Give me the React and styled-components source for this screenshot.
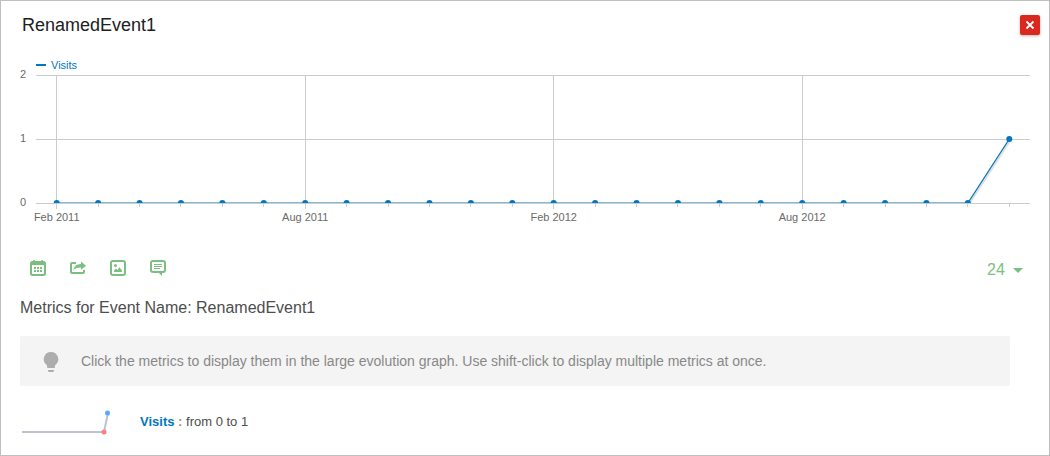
import React from "react";
import styled, { createGlobalStyle } from "styled-components";

const GlobalStyle = createGlobalStyle`
  *, *::before, *::after { box-sizing: border-box; }
  body {
    margin: 0;
    background: #fff;
    color: #4d4d4d;
    font-family: "Liberation Sans", Arial, sans-serif;
  }
`;

const Popover = styled.main`
  border: 1px solid #bfbfbf;
  padding-bottom: 17px;
`;

const Header = styled.header`
  display: flex;
  align-items: center;
  justify-content: space-between;
  height: 48px;
  padding: 0 9px 0 21px;
`;

const Title = styled.h1`
  margin: 0;
  font-size: 18px;
  line-height: 24px;
  font-weight: 400;
  color: #212121;
`;

const CloseButton = styled.button`
  display: grid;
  place-items: center;
  width: 20px;
  height: 20px;
  padding: 0;
  border: 0;
  border-radius: 2px;
  background: #d9291f;
  box-shadow: 0 1px 3px rgba(0, 0, 0, 0.3);
  cursor: pointer;
`;

const ChartArea = styled.section`
  padding: 8px 19px 0 35px;
`;

const ChartSvg = styled.svg`
  display: block;
  width: 100%;
  height: 171px;
  overflow: visible;
  font-size: 11px;
`;

const AxisText = styled.text`
  fill: #6a6a6a;
`;

const LegendText = styled.text`
  fill: #0077c0;
`;

const Toolbar = styled.div`
  display: flex;
  align-items: center;
  justify-content: space-between;
  height: 32px;
  margin-top: 24px;
  padding: 0 26px 0 29px;
  color: #7bbf80;
`;

const Actions = styled.div`
  display: flex;
  gap: 24px;
`;

const IconButton = styled.button`
  display: block;
  width: 16px;
  height: 16px;
  padding: 0;
  border: 0;
  background: none;
  color: inherit;
  cursor: pointer;

  svg { display: block; }
`;

const LimitLabel = styled.label`
  display: flex;
  align-items: center;
  gap: 8px;
  padding-top: 4px;
`;

const LimitSelect = styled.select`
  appearance: none;
  width: 18px;
  height: 24px;
  margin: 0;
  padding: 0;
  border: 0;
  background: none;
  color: inherit;
  font: 16px/24px "Liberation Sans", Arial, sans-serif;
  cursor: pointer;
`;

const Metrics = styled.section`
  padding: 0 39px 0 19px;
`;

const Subtitle = styled.h2`
  margin: 12px 0 16px;
  font-size: 16px;
  line-height: 24px;
  font-weight: 400;
`;

const Hint = styled.p`
  display: flex;
  align-items: center;
  gap: 22px;
  min-height: 50px;
  margin: 0;
  padding: 0 23px;
  border-radius: 2px;
  background: #f4f4f4;
  color: #888;
  font-size: 14px;
  line-height: 20px;

  svg { flex: none; }
`;

const MetricRow = styled.button`
  display: flex;
  align-items: center;
  gap: 20px;
  margin: 20px 0 0;
  padding: 0;
  border: 0;
  background: none;
  color: inherit;
  font: 13px/20px "Liberation Sans", Arial, sans-serif;
  cursor: pointer;

  strong { color: #0077c0; }
  em { color: #a08c7a; font-style: normal; font-weight: 700; }
`;

const visits = [...Array(23).fill(0), 1];
const monthLabels = { 0: "Feb 2011", 6: "Aug 2011", 12: "Feb 2012", 18: "Aug 2012" };
const xAt = (i) => `${((i + 0.5) / visits.length) * 100}%`;
const yAt = (v) => 146 - v * 64;

function EvolutionChart() {
  return (
    <ChartSvg role="img" aria-label="Visits per month">
      <rect y="7" width="10" height="2" fill="#0077c0" />
      <LegendText x="15" y="12">Visits</LegendText>
      {[2, 1, 0].map((v) => (
        <rect key={v} x="0" width="100%" y={yAt(v)} height="1" fill="#ccc" />
      ))}
      <g stroke="#ccc" shapeRendering="crispEdges">
        {visits.map((_, i) => (
          <line key={i} x1={xAt(i)} x2={xAt(i)} y1={monthLabels[i] ? 18 : 146} y2={monthLabels[i] ? 152 : 150} />
        ))}
      </g>
      <svg x="0" y="0" width="100%" height="146" overflow="hidden">
        {visits.slice(1).map((v, i) => v !== visits[i] && (
          <line key={i} x1={xAt(i)} x2={xAt(i + 1)} y1={yAt(visits[i]) + 2} y2={yAt(v) + 2} stroke="#000" strokeOpacity="0.13" strokeWidth="3" />
        ))}
        {visits.slice(1).map((v, i) => (
          <line key={i} x1={xAt(i)} x2={xAt(i + 1)} y1={yAt(visits[i])} y2={yAt(v)} stroke="#0077c0" strokeWidth="1.2" />
        ))}
        {visits.map((v, i) => (
          <circle key={i} cx={xAt(i)} cy={yAt(v)} r="3" fill="#0077c0" />
        ))}
      </svg>
      {[2, 1, 0].map((v) => (
        <AxisText key={v} x="-10" y={yAt(v) + 3} textAnchor="end">{v}</AxisText>
      ))}
      {Object.entries(monthLabels).map(([i, label]) => (
        <AxisText key={i} x={xAt(Number(i))} y="164" textAnchor="middle">{label}</AxisText>
      ))}
    </ChartSvg>
  );
}

const CalendarIcon = () => (
  <svg width="16" height="16" viewBox="0 0 16 16" fill="currentColor">
    <path fillRule="evenodd" d="M3 1a1 1 0 0 1 2 0h6a1 1 0 0 1 2 0h.500A2.500 2.500 0 0 1 16 3.500v10a2.500 2.500 0 0 1-2.500 2.500h-11A2.500 2.500 0 0 1 0 13.500v-10A2.500 2.500 0 0 1 2.500 1zM2 5v8a1 1 0 0 0 1 1h10a1 1 0 0 0 1-1V5z" />
    <path d="M4 7h2v2H4zM7 7h2v2H7zM10 7h2v2h-2zM4 10h2v2H4zM7 10h2v2H7zM10 10h2v2h-2z" />
  </svg>
);

const ShareIcon = () => (
  <svg width="16" height="16" viewBox="0 0 16 16">
    <path d="M6 3H2a1 1 0 0 0-1 1v8a1 1 0 0 0 1 1h11a1 1 0 0 0 1-1v-2" fill="none" stroke="currentColor" strokeWidth="2" />
    <path d="M11 1.500 16 5.700l-5 4.100V7.500C7.500 7.300 5.200 8.300 3.300 10 4 6.500 6.500 4 11 3.900z" fill="currentColor" />
  </svg>
);

const ImageIcon = () => (
  <svg width="16" height="16" viewBox="0 0 16 16">
    <rect x="1" y="1" width="14" height="14" rx="2" fill="none" stroke="currentColor" strokeWidth="2" />
    <circle cx="5.500" cy="5.500" r="1.500" fill="currentColor" />
    <path d="M4 12v-1.500L6 8.500 7.500 10l2-3 1.500 2.500.5-.5.500 3z" fill="currentColor" />
  </svg>
);

const AnnotationIcon = () => (
  <svg width="16" height="16" viewBox="0 0 16 16">
    <rect x="1" y="1" width="14" height="11" rx="2" fill="none" stroke="currentColor" strokeWidth="2" />
    <path d="M8 12h4v4z" fill="currentColor" />
    <path d="M4 4.500h8M4 6.500h8M4 8.500h6" stroke="currentColor" />
  </svg>
);

const Sparkline = () => (
  <svg width="100" height="32" viewBox="0 0 100 32">
    <path d="M2 26H84L88 7" fill="none" stroke="#bcc3ce" strokeWidth="2" />
    <circle cx="84" cy="26" r="2.500" fill="#ff7f7f" />
    <circle cx="87.500" cy="7" r="2.500" fill="#55aaff" />
  </svg>
);

export default function App() {
  return (
    <>
      <GlobalStyle />
      <Popover>
        <Header>
          <Title>RenamedEvent1</Title>
          <CloseButton aria-label="Close">
            <svg width="10" height="10" viewBox="0 0 10 10">
              <path d="m1.500 1.500 7 7m0-7-7 7" stroke="#fff" strokeWidth="1.800" />
            </svg>
          </CloseButton>
        </Header>
        <ChartArea>
          <EvolutionChart />
        </ChartArea>
        <Toolbar>
          <Actions>
            <IconButton aria-label="Change period"><CalendarIcon /></IconButton>
            <IconButton aria-label="Export"><ShareIcon /></IconButton>
            <IconButton aria-label="Export as image"><ImageIcon /></IconButton>
            <IconButton aria-label="Annotations"><AnnotationIcon /></IconButton>
          </Actions>
          <LimitLabel>
            <LimitSelect aria-label="Number of periods" defaultValue="24">
              <option>24</option>
              <option>30</option>
              <option>60</option>
            </LimitSelect>
            <svg width="10" height="5" viewBox="0 0 10 5">
              <path d="M0 0h10L5 5z" fill="currentColor" />
            </svg>
          </LimitLabel>
        </Toolbar>
        <Metrics>
          <Subtitle>Metrics for Event Name: RenamedEvent1</Subtitle>
          <Hint>
            <svg width="16" height="22" viewBox="0 0 16 22" fill="#adadad">
              <path d="M8 2a7.200 7.200 0 0 0-4 13.200V17a1 1 0 0 0 1 1h6a1 1 0 0 0 1-1v-1.800A7.200 7.200 0 0 0 8 2zM5 20h6v.5a1.500 1.500 0 0 1-1.500 1.500h-3A1.500 1.500 0 0 1 5 20.500z" />
            </svg>
            Click the metrics to display them in the large evolution graph. Use shift-click to display multiple metrics at once.
          </Hint>
          <MetricRow type="button">
            <Sparkline />
            <span><strong>Visits</strong> <em>:</em> from 0 to 1</span>
          </MetricRow>
        </Metrics>
      </Popover>
    </>
  );
}
